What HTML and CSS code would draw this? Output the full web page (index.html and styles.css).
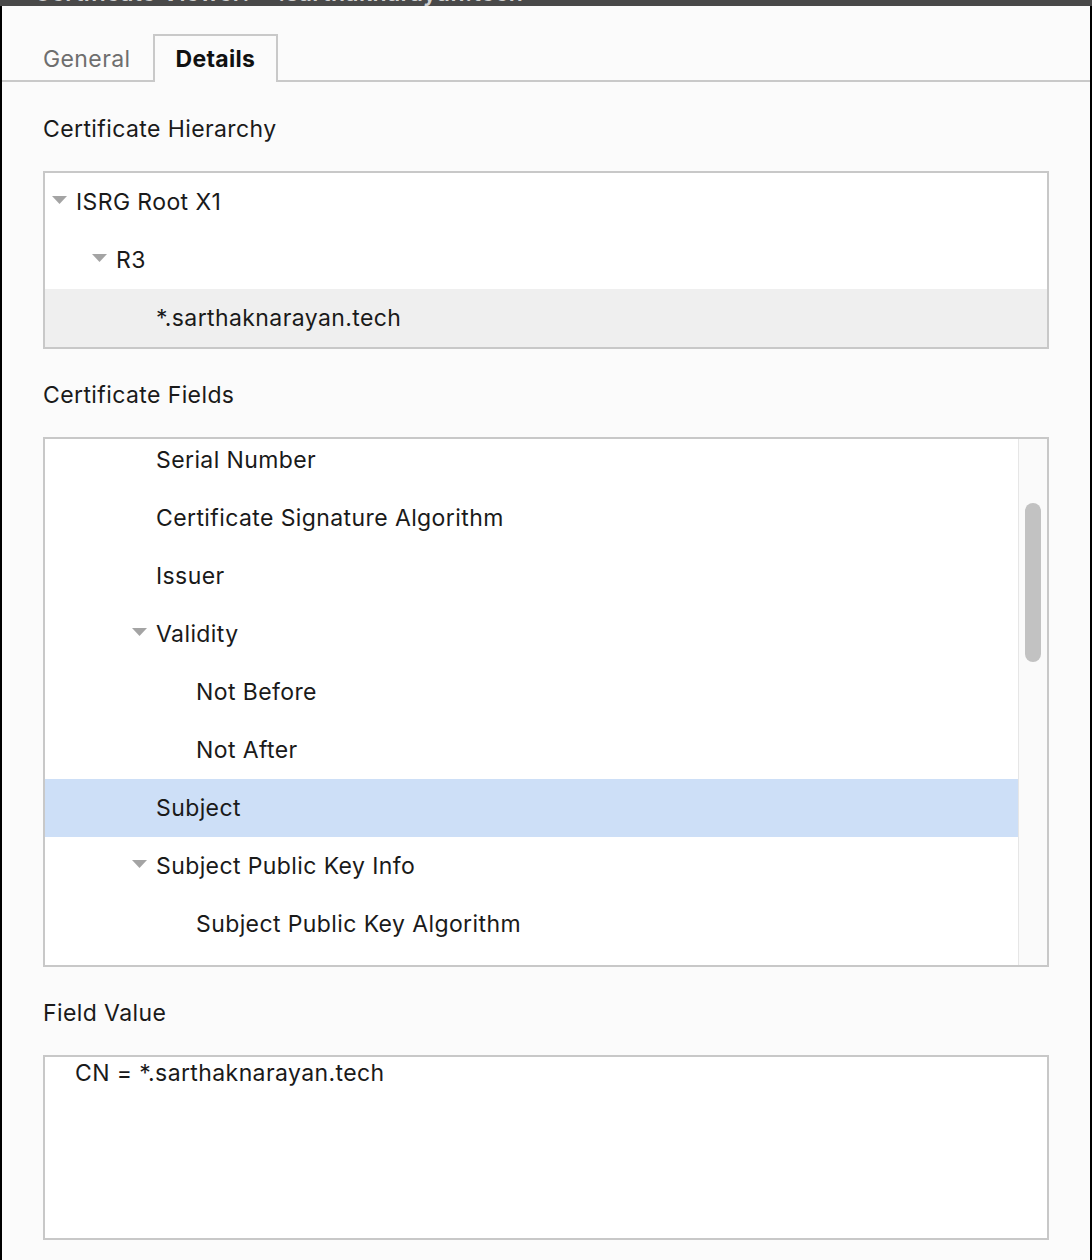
FILE: index.html
```html
<!DOCTYPE html>
<html>
<head>
<meta charset="utf-8">
<link rel="stylesheet" href="styles.css">
</head>
<body>
<div class="titlebar"><span class="title">Certificate Viewer: “*.sarthaknarayan.tech”</span></div>
<div class="window">
  <div class="tabs">
    <div class="tab">General</div>
    <div class="tab active">Details</div>
  </div>
  <div class="content">
    <div class="label first">Certificate Hierarchy</div>
    <div class="box tree">
      <div class="row l0"><span class="twisty"><svg width="15" height="8" viewBox="0 0 15 8"><polygon points="0,0 15,0 7.5,8" fill="#a4a4a4"/></svg></span>ISRG Root X1</div>
      <div class="row l1"><span class="twisty"><svg width="15" height="8" viewBox="0 0 15 8"><polygon points="0,0 15,0 7.5,8" fill="#a4a4a4"/></svg></span>R3</div>
      <div class="row l2 sel-gray">*.sarthaknarayan.tech</div>
    </div>

    <div class="label">Certificate Fields</div>
    <div class="box fields">
      <div class="list">
        <div class="list-inner">
          <div class="row l2">Serial Number</div>
          <div class="row l2">Certificate Signature Algorithm</div>
          <div class="row l2">Issuer</div>
          <div class="row l2"><span class="twisty"><svg width="15" height="8" viewBox="0 0 15 8"><polygon points="0,0 15,0 7.5,8" fill="#a4a4a4"/></svg></span>Validity</div>
          <div class="row l3">Not Before</div>
          <div class="row l3">Not After</div>
          <div class="row l2 sel-blue">Subject</div>
          <div class="row l2"><span class="twisty"><svg width="15" height="8" viewBox="0 0 15 8"><polygon points="0,0 15,0 7.5,8" fill="#a4a4a4"/></svg></span>Subject Public Key Info</div>
          <div class="row l3">Subject Public Key Algorithm</div>
        </div>
      </div>
      <div class="scrolltrack"><div class="thumb"></div></div>
    </div>

    <div class="label">Field Value</div>
    <div class="box value">CN = *.sarthaknarayan.tech</div>
  </div>
</div>
</body>
</html>
```

FILE: styles.css
```css
html, body {
  margin: 0;
  padding: 0;
}
body {
  background: #000;
  font-family: Inter, "Noto Sans", "Liberation Sans", sans-serif;
  color: #1a1a1a;
  width: 1092px;
  height: 1260px;
  overflow: hidden;
  letter-spacing: 0.4px;
}
.titlebar {
  height: 6px;
  background: #494949;
  overflow: hidden;
}
.title {
  display: block;
  margin-top: -20px;
  padding-left: 34px;
  font-size: 23px;
  line-height: 26px;
  font-weight: 600;
  color: #d0d0d0;
}
.window {
  margin: 0 2px;
  background: #fbfbfb;
  height: 1254px;
}
.tabs {
  display: flex;
  padding: 28px 0 0 19px;
  border-bottom: 2px solid #c9c9c9;
}
.tab {
  font-size: 23px;
  line-height: 46px;
  height: 44px;
  padding: 0 20px 2px;
  border: 2px solid transparent;
  border-bottom: none;
  color: #6e6e6e;
  margin-bottom: -2px;
}
.tab.active {
  border-color: #c9c9c9;
  background: #fbfbfb;
  color: #111;
  font-weight: 700;
  letter-spacing: 0.3px;
  padding: 0 21px 2px;
}
.content {
  padding: 0 41px;
}
.label {
  font-size: 23px;
  line-height: 26px;
  margin: 33px 0 29px;
}
.label.first {
  margin-top: 34px;
}
.box {
  border: 2px solid #c8c8c8;
  background: #fff;
}
.row {
  display: flex;
  align-items: center;
  height: 58px;
  font-size: 23px;
  white-space: nowrap;
}
.row.l0 { padding-left: 31px; }
.row.l1 { padding-left: 71px; }
.row.l2 { padding-left: 111px; }
.row.l3 { padding-left: 151px; }
.twisty {
  display: inline-flex;
  width: 15px;
  margin-left: -24px;
  margin-right: 9px;
  margin-top: -4px;
}
.sel-gray { background: #efefef; }
.sel-blue { background: #cddff7; }
.fields {
  display: flex;
  height: 526px;
}
.list {
  flex: 1;
  overflow: hidden;
}
.list-inner {
  margin-top: -8px;
}
.scrolltrack {
  width: 28px;
  border-left: 1px solid #e6e6e6;
  background: #fafafa;
  position: relative;
}
.thumb {
  position: absolute;
  left: 6px;
  top: 64px;
  width: 16px;
  height: 159px;
  border-radius: 8px;
  background: #c2c2c2;
}
.value {
  padding: 3px 30px 0;
  font-size: 23px;
  line-height: 26px;
  height: 178px;
}
```
